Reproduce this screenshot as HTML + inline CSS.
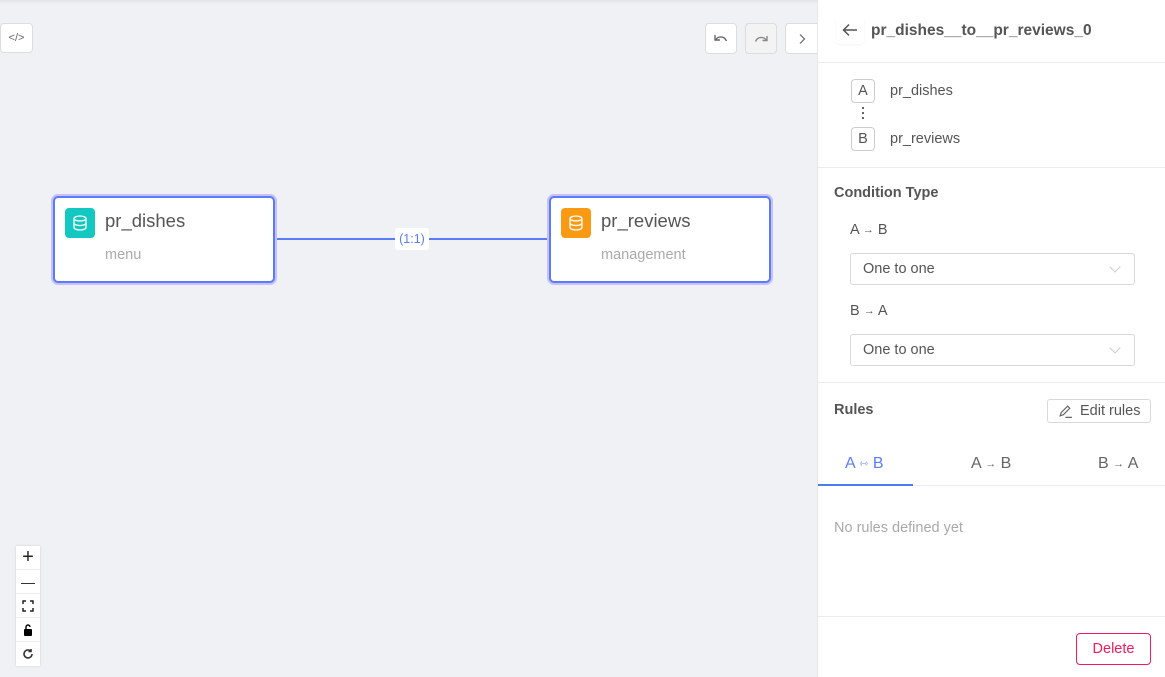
<!DOCTYPE html>
<html><head><style>
*{box-sizing:border-box;margin:0;padding:0}
body{width:1165px;height:677px;overflow:hidden;font-family:"Liberation Sans",sans-serif;background:#f0f1f5;position:relative;color:#555}
.abs{position:absolute}
.btn{position:absolute;background:#fff;border:1px solid #ddd;border-radius:4px;display:flex;align-items:center;justify-content:center;color:#666;font-size:13px}
.node{position:absolute;background:#fff;border:2px solid #5b7cfa;border-radius:5px;box-shadow:0 0 0 2px #c9c0f7;width:222px;height:87px}
.node .ic{position:absolute;left:10px;top:10px;width:30px;height:30px;border-radius:4px;display:flex;align-items:center;justify-content:center}
.node .t{position:absolute;left:50px;top:12px;font-size:18.5px;color:#555}
.node .s{position:absolute;left:50px;top:49px;font-size:14.5px;color:#aaa}
.panel{position:absolute;left:817px;top:0;width:348px;height:677px;background:#fff;border-left:1px solid #e6e6ea}
.hr{position:absolute;left:0;width:348px;height:1px;background:#ececf0}
.sel{position:absolute;left:32px;width:285px;height:32px;border:1px solid #d9d9d9;border-radius:3px;font-size:14.5px;color:#555;padding:7px 12px}
.sel:after{content:"";position:absolute;right:15px;top:9px;width:7px;height:7px;border-right:1px solid #ccc;border-bottom:1px solid #ccc;transform:rotate(45deg)}
.lbl{position:absolute;font-size:14.5px;color:#555}
.ar{font-size:11px;vertical-align:1px}
.zc{position:absolute;left:16px;width:24px;height:24px;background:#fff;border-bottom:1px solid #eee;display:flex;align-items:center;justify-content:center;font-size:14px;color:#222}
</style></head><body>
<div class="abs" style="left:0;top:0;width:817px;height:4px;background:linear-gradient(#e2e3e8,#f0f1f5)"></div>
<div class="btn" style="left:0;top:23px;width:33px;height:30px;font-size:11px">&lt;/&gt;</div>
<div class="btn" style="left:705px;top:23px;width:32px;height:31px"><svg width="16" height="14" viewBox="0 0 16 14" fill="none" stroke="#666" stroke-width="1.4"><path d="M2 3v5h5"/><path d="M2.5 8c2.5-4 8.5-4.5 11 1"/></svg></div>
<div class="btn" style="left:745px;top:23px;width:32px;height:31px;background:#f3f3f3"><svg width="16" height="14" viewBox="0 0 16 14" fill="none" stroke="#888" stroke-width="1.4"><path d="M14 4v4.5h-4.5"/><path d="M13.5 8.5c-2.5-4-8.5-4.5-11 1"/></svg></div>
<div class="btn" style="left:785px;top:23px;width:40px;height:31px;justify-content:flex-start;padding-left:11px"><svg width="10" height="14" viewBox="0 0 10 14" fill="none" stroke="#666" stroke-width="1.2"><path d="M3 2.5l4.5 4.5-4.5 4.5"/></svg></div>

<div class="abs" style="left:275px;top:238px;width:274px;height:1.5px;background:#5b7cfa"></div>
<div class="abs" style="left:395px;top:228px;width:34px;height:22px;background:#fff;border-radius:3px;color:#5b7cfa;font-size:12.5px;text-align:center;line-height:22px">(1:1)</div>

<div class="node" style="left:53px;top:196px"><div class="ic" style="background:#13c8c0"><svg width="18" height="18" viewBox="0 0 18 18" fill="none" stroke="#fff" stroke-width="1.3"><ellipse cx="9" cy="4.5" rx="6" ry="2.5"/><path d="M3 4.5v9c0 1.4 2.7 2.5 6 2.5s6-1.1 6-2.5v-9"/><path d="M3 9c0 1.4 2.7 2.5 6 2.5s6-1.1 6-2.5"/></svg></div><div class="t">pr_dishes</div><div class="s">menu</div></div>
<div class="node" style="left:549px;top:196px"><div class="ic" style="background:#fa9a12"><svg width="18" height="18" viewBox="0 0 18 18" fill="none" stroke="#fff" stroke-width="1.3"><ellipse cx="9" cy="4.5" rx="6" ry="2.5"/><path d="M3 4.5v9c0 1.4 2.7 2.5 6 2.5s6-1.1 6-2.5v-9"/><path d="M3 9c0 1.4 2.7 2.5 6 2.5s6-1.1 6-2.5"/></svg></div><div class="t">pr_reviews</div><div class="s">management</div></div>

<div class="abs" style="left:16px;top:546px;width:24px;height:120px;box-shadow:0 0 2px rgba(0,0,0,.15)"></div>
<div class="zc" style="top:546px;font-size:20px">+</div>
<div class="zc" style="top:570px">—</div>
<div class="zc" style="top:594px"><svg width="12" height="12" viewBox="0 0 12 12" fill="none" stroke="#222" stroke-width="1.5"><path d="M1 4V1h3M8 1h3v3M11 8v3H8M4 11H1V8"/></svg></div>
<div class="zc" style="top:618px"><svg width="10" height="12" viewBox="0 0 10 12"><path d="M3 5V3a2 2 0 0 1 4 0" fill="none" stroke="#000" stroke-width="1.4"/><rect x="1" y="5" width="8" height="7" rx="1" fill="#000"/></svg></div>
<div class="zc" style="top:642px;border:none"><svg width="12" height="12" viewBox="0 0 12 12" fill="none" stroke="#333" stroke-width="1.6"><path d="M10 6a4 4 0 1 1-1.2-2.9"/><path d="M9 1v2.5H6.5"/></svg></div>

<div class="panel">
<div class="abs" style="left:18px;top:16px;width:28px;height:28px;border-radius:4px;box-shadow:0 1px 2px rgba(0,0,0,.05)"><svg width="28" height="28" viewBox="0 0 28 28" fill="none" stroke="#555" stroke-width="1.5"><path d="M21 14H8M13 8.5l-5.5 5.5 5.5 5.5"/></svg></div>
<div class="abs" style="left:53px;top:22px;font-size:15.5px;font-weight:bold;color:#555">pr_dishes__to__pr_reviews_0</div>
<div class="hr" style="top:62px"></div>
<div class="abs" style="left:33px;top:79px;width:24px;height:24px;border:1px solid #ccc;border-radius:4px;text-align:center;line-height:22px;font-size:14.5px">A</div>
<div class="lbl" style="left:72px;top:83px">pr_dishes</div>
<div class="abs" style="left:44px;top:107px;width:2px;height:14px;background:repeating-linear-gradient(#666 0 2px,transparent 2px 5px)"></div>
<div class="abs" style="left:33px;top:127px;width:24px;height:24px;border:1px solid #ccc;border-radius:4px;text-align:center;line-height:22px;font-size:14.5px">B</div>
<div class="lbl" style="left:72px;top:131px">pr_reviews</div>
<div class="hr" style="top:167px"></div>
<div class="abs" style="left:16px;top:185px;font-size:14.5px;font-weight:bold;color:#555">Condition Type</div>
<div class="lbl" style="left:32px;top:222px">A <span class="ar">→</span> B</div>
<div class="sel" style="top:253px">One to one</div>
<div class="lbl" style="left:32px;top:303px">B <span class="ar">→</span> A</div>
<div class="sel" style="top:334px">One to one</div>
<div class="hr" style="top:382px"></div>
<div class="abs" style="left:16px;top:402px;font-size:14.5px;font-weight:bold;color:#555">Rules</div>
<div class="abs" style="left:229px;top:399px;width:104px;height:24px;border:1px solid #d9d9d9;border-radius:3px;font-size:14.5px;color:#555;padding:3px 0 0 32px">Edit rules<svg class="abs" style="left:10px;top:4px" width="15" height="15" viewBox="0 0 14 14" fill="none" stroke="#666" stroke-width="1.1"><path d="M2 11l1-3 6-6 2 2-6 6-3 1zM7 12.5h6"/></svg></div>
<div class="abs" style="left:27px;top:455px;font-size:16px;color:#5b7cfa">A <span class="ar" style="color:#8aa0fb">⇿</span> B</div>
<div class="abs" style="left:153px;top:455px;font-size:16px;color:#666">A <span class="ar">→</span> B</div>
<div class="abs" style="left:280px;top:455px;font-size:16px;color:#666">B <span class="ar">→</span> A</div>
<div class="hr" style="top:485px"></div>
<div class="abs" style="left:0;top:484px;width:95px;height:2px;background:#4c7cf5"></div>
<div class="abs" style="left:16px;top:520px;font-size:14.5px;color:#aaa">No rules defined yet</div>
<div class="hr" style="top:616px"></div>
<div class="abs" style="left:258px;top:633px;width:75px;height:32px;border:1px solid #f5195a;border-radius:4px;color:#f5195a;font-size:14.5px;text-align:center;line-height:30px">Delete</div>
</div>
</body></html>
